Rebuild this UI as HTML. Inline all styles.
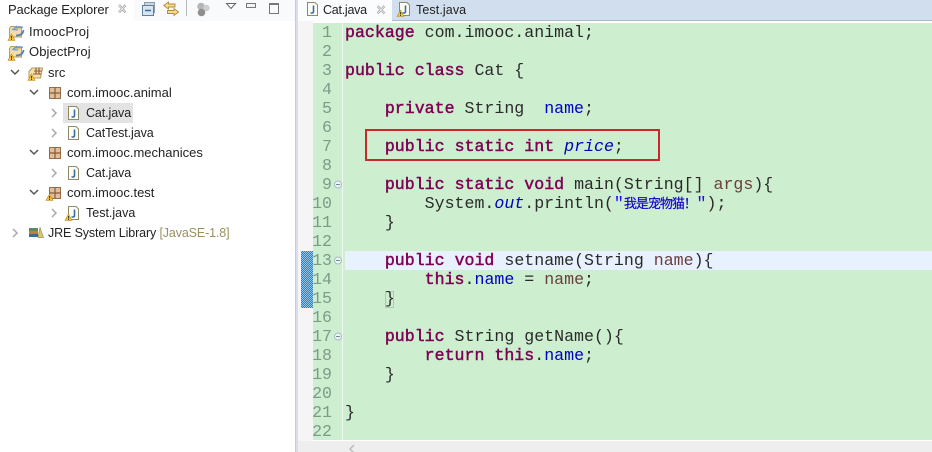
<!DOCTYPE html>
<html><head><meta charset="utf-8"><style>
html,body{margin:0;padding:0;width:932px;height:452px;overflow:hidden;background:#fff}
body{position:relative;font-family:"Liberation Sans","Noto Sans CJK SC",sans-serif}
.a{position:absolute}
.t{position:absolute;font-size:13px;line-height:20px;height:20px;color:#222;white-space:nowrap}
.j{font-size:12.5px;letter-spacing:-.1px}
.ln{position:absolute;left:307px;width:25px;text-align:right;font:16.6px/19px "Liberation Mono",monospace;color:#7f9a87;white-space:pre}
.c{position:absolute;left:345px;font:16.6px/19px "Liberation Mono",monospace;color:#2a2a2a;white-space:pre}
.k{color:#7f0055;-webkit-text-stroke:.45px #7f0055}.f{color:#0000c0}.i{color:#0000c0;font-style:italic}.v{color:#6a3e3e}.s{color:#2a00ff}
.z{display:inline-block;width:72.700px;font-family:"Noto Sans CJK SC",sans-serif;font-size:13px;letter-spacing:-1px;line-height:19px;vertical-align:top;position:relative;top:-1px;color:#1500d0;-webkit-text-stroke:.2px #1500d0}
svg{position:absolute;overflow:visible}
</style></head><body>
<svg width="0" height="0" style="position:absolute"><defs>
<g id="J"><path d="M1.500 .5H9L11.500 3V13.500H1.500Z" fill="#fdfdf6" stroke="#8c8a68"/><path d="M7.500 3.500V9.500Q7.500 11 6 11H4.500" fill="none" stroke="#3b6ea5" stroke-width="1.600"/></g>
<g id="P"><path d="M1.500 3.500L3 1.500H7L8 3H13.500V12H1.500Z" fill="#f4dca8" stroke="#b79a62"/><path d="M5 4.500Q9 .5 15 2.500M9 1L5 4.500L10 5" fill="none" stroke="#6d9ccb" stroke-width="1.300"/><path d="M15.500 5Q15 10.500 8 10.500" fill="none" stroke="#4d82b8" stroke-width="1.700"/></g>
<g id="S"><path d="M1 5.500L4 2H14.500L12.500 12H1Z" fill="#f6dfa9" stroke="#b59a62"/><path d="M6 5H14M5 8H13M8 1.500V8M11 1.500V8" stroke="#8d5a38" stroke-width="1.100" fill="none"/></g>
<g id="W"><path d="M3.500 0L7 6.500H0Z" fill="#f5c33b" stroke="#b98a1d" stroke-width=".6"/><path d="M3.500 2V4.500M3.500 5V6" stroke="#332" stroke-width=".9"/></g>
<g id="B"><rect x=".5" y=".5" width="11" height="11" fill="#dfbe9c" stroke="#9a6c4a"/><path d="M6 .5V11.500M.5 6H11.500" stroke="#8a5a3a" stroke-width="1.200"/></g>
<path id="o" d="M0 0L4 4L0 8" fill="none" stroke="#a8a8a8" stroke-width="1.500"/>
<path id="d" d="M0 0L4 4L8 0" fill="none" stroke="#555" stroke-width="1.500"/>
</defs></svg>

<!-- left panel -->
<div class="a" style="left:0;top:0;width:134px;height:21px;background:#fff"></div>
<div class="a" style="left:134px;top:0;width:161px;height:21px;background:#f9fafb"></div>
<div class="t" style="left:8px;top:0;letter-spacing:-.12px">Package Explorer</div>
<svg style="left:117px;top:4px" width="10" height="10"><path d="M2 1L8.500 8.500M8.500 1L2 8.500" stroke="#999" stroke-width="2.200"/><path d="M2 1L8.500 8.500M8.500 1L2 8.500" stroke="#fff" stroke-width=".8"/></svg>
<svg style="left:142px;top:2px" width="14" height="14"><rect x="2.500" y=".5" width="10" height="10" fill="#ccd6e0" stroke="#8d9cad"/><rect x=".5" y="3.500" width="11" height="10" fill="#d9e6f2" stroke="#60809e"/><path d="M3 8.500H9" stroke="#3d6a96" stroke-width="1.500"/></svg>
<svg style="left:163px;top:1px" width="16" height="16"><path d="M.8 4.500L5.500 1V3H12V6H5.500V8ZM15.500 11L11 7.500V9.500H4.500V12.500H11V14.500Z" fill="#f5dc8e" stroke="#b0893c" stroke-width=".9"/></svg>
<div class="a" style="left:186px;top:0;width:1px;height:16px;background:#bbb"></div>
<svg style="left:196px;top:2px" width="16" height="15"><circle cx="5" cy="4.500" r="3.800" fill="#b5b5b5"/><circle cx="10.500" cy="6" r="3.300" fill="#cfcfcf"/><circle cx="5.500" cy="10.500" r="3.800" fill="#8f8f8f"/></svg>
<svg style="left:226px;top:3px" width="10" height="7"><path d="M.5 .5H9.500L5 5.500Z" fill="#fff" stroke="#666"/></svg>
<div class="a" style="left:246px;top:3px;width:8px;height:3px;border:1px solid #777;background:#f4f4f4"></div>
<div class="a" style="left:269px;top:3px;width:8px;height:8px;border:1px solid #777;border-top-width:2px"></div>

<svg style="left:8px;top:25px" width="17" height="16"><use href="#P"/><use href="#W" y="9"/></svg>
<div class="t" style="left:29px;top:22px;letter-spacing:.2px">ImoocProj</div>
<svg style="left:8px;top:45px" width="17" height="16"><use href="#P"/><use href="#W" y="9"/></svg>
<div class="t" style="left:29px;top:42px;letter-spacing:.1px">ObjectProj</div>
<svg style="left:11px;top:70px" width="9" height="6"><use href="#d"/></svg>
<svg style="left:28px;top:66px" width="17" height="15"><use href="#S"/><use href="#W" y="8"/></svg>
<div class="t" style="left:48px;top:63px">src</div>
<svg style="left:30px;top:90px" width="9" height="6"><use href="#d"/></svg>
<svg style="left:49px;top:87px" width="13" height="13"><use href="#B"/></svg>
<div class="t" style="left:67px;top:83px">com.imooc.animal</div>
<div class="a" style="left:63px;top:103px;width:70px;height:20px;background:#e3e3e3"></div>
<svg style="left:52px;top:109px" width="6" height="9"><use href="#o"/></svg>
<svg style="left:67px;top:106px" width="13" height="15"><use href="#J"/></svg>
<div class="t j" style="left:86px;top:103px">Cat.java</div>
<svg style="left:52px;top:129px" width="6" height="9"><use href="#o"/></svg>
<svg style="left:67px;top:126px" width="13" height="15"><use href="#J"/></svg>
<div class="t j" style="left:86px;top:123px">CatTest.java</div>
<svg style="left:30px;top:150px" width="9" height="6"><use href="#d"/></svg>
<svg style="left:49px;top:147px" width="13" height="13"><use href="#B"/></svg>
<div class="t" style="left:67px;top:143px">com.imooc.mechanices</div>
<svg style="left:52px;top:169px" width="6" height="9"><use href="#o"/></svg>
<svg style="left:67px;top:166px" width="13" height="15"><use href="#J"/></svg>
<div class="t j" style="left:86px;top:163px">Cat.java</div>
<svg style="left:30px;top:190px" width="9" height="6"><use href="#d"/></svg>
<svg style="left:49px;top:187px" width="13" height="13"><use href="#B"/><use href="#W" x="-3" y="7"/></svg>
<div class="t" style="left:67px;top:183px">com.imooc.test</div>
<svg style="left:52px;top:209px" width="6" height="9"><use href="#o"/></svg>
<svg style="left:67px;top:206px" width="13" height="15"><use href="#J"/><use href="#W" x="-2" y="8"/></svg>
<div class="t j" style="left:86px;top:203px;letter-spacing:0">Test.java</div>
<svg style="left:13px;top:229px" width="6" height="9"><use href="#o"/></svg>
<svg style="left:28px;top:227px" width="16" height="12"><rect x="1" y="1" width="9" height="3" fill="#5a8a6a"/><rect x="1" y="4" width="9" height="3" fill="#c0803a"/><rect x="1" y="7" width="9" height="3" fill="#3a6f8f"/><path d="M12 .5L15.500 10.500H10Z" fill="#e8c468" stroke="#a98a3a" stroke-width=".7"/></svg>
<div class="t" style="left:48px;top:223px;font-size:12.5px;letter-spacing:-.13px">JRE System Library <span style="color:#9a8f5f">[JavaSE-1.8]</span></div>

<div class="a" style="left:295px;top:0;width:3px;height:452px;background:#dcdcec;border-left:1px solid #c9c9dc;box-sizing:border-box"></div>

<!-- tab bar -->
<div class="a" style="left:298px;top:0;width:634px;height:20px;background:#d0deed"></div>
<div class="a" style="left:298px;top:20px;width:634px;height:1px;background:#a9bcc6"></div>
<div class="a" style="left:298px;top:0;width:94px;height:21px;background:#fbfcfe"></div>
<svg style="left:306px;top:2px" width="13" height="15"><use href="#J"/></svg>
<div class="t" style="left:323px;top:0;font-size:12.5px;letter-spacing:-.25px">Cat.java</div>
<svg style="left:376px;top:5px" width="10" height="10"><path d="M1.500 1L8.500 8.500M8.500 1L1.500 8.500" stroke="#999" stroke-width="2.200"/><path d="M1.500 1L8.500 8.500M8.500 1L1.500 8.500" stroke="#fff" stroke-width=".8"/></svg>
<svg style="left:398px;top:2px" width="13" height="15"><use href="#J"/><use href="#W" x="-1" y="8"/></svg>
<div class="t" style="left:416px;top:0;font-size:12.5px;letter-spacing:.1px">Test.java</div>

<!-- editor -->
<div class="a" style="left:298px;top:21px;width:15px;height:420px;background:#f5f5f5"></div>
<div class="a" style="left:313px;top:23px;width:619px;height:417px;background:#cdeecf"></div>
<div class="a" style="left:342px;top:23px;width:1px;height:417px;background:#f0f7f0"></div>
<div class="a" style="left:345px;top:251px;width:587px;height:19px;background:#e8f2fe"></div>
<div class="a" style="left:301px;top:251px;width:12px;height:57px;background-color:#2e8ac6;background-image:repeating-conic-gradient(#2a80c4 0 25%,#8fc8ea 0 50%);background-size:2px 2px"></div>
<div class="a" style="left:385px;top:291px;width:9px;height:17px;border:1px solid #b5c4b0;box-sizing:border-box"></div>
<div class="a" style="left:365px;top:129px;width:295px;height:32px;border:2px solid #c9282d;box-sizing:border-box"></div>

<div class="ln" style="top:23px">1
2
3
4
5
6
7
8
9
10
11
12
13
14
15
16
17
18
19
20
21
22</div>

<svg style="left:334px;top:180px" width="8" height="9"><circle cx="4" cy="4.500" r="3.500" fill="#eef5f5" stroke="#a5bcc5"/><path d="M2 4.500H6" stroke="#6f8a95"/></svg>
<svg style="left:334px;top:256px" width="8" height="9"><circle cx="4" cy="4.500" r="3.500" fill="#eef5f5" stroke="#a5bcc5"/><path d="M2 4.500H6" stroke="#6f8a95"/></svg>
<svg style="left:334px;top:332px" width="8" height="9"><circle cx="4" cy="4.500" r="3.500" fill="#eef5f5" stroke="#a5bcc5"/><path d="M2 4.500H6" stroke="#6f8a95"/></svg>

<div class="c" style="top:23px"><span class="k">package</span> com.imooc.animal;

<span class="k">public</span> <span class="k">class</span> Cat {

    <span class="k">private</span> String  <span class="f">name</span>;

    <span class="k">public</span> <span class="k">static</span> <span class="k">int</span> <span class="i">price</span>;

    <span class="k">public</span> <span class="k">static</span> <span class="k">void</span> main(String[] <span class="v">args</span>){
        System.<span class="i">out</span>.println(<span class="s">"</span><span class="z">我是宠物猫！</span><span class="s">"</span>);
    }

    <span class="k">public</span> <span class="k">void</span> setname(String <span class="v">name</span>){
        <span class="k">this</span>.<span class="f">name</span> = <span class="v">name</span>;
    }

    <span class="k">public</span> String getName(){
        <span class="k">return</span> <span class="k">this</span>.<span class="f">name</span>;
    }

}
</div>

<!-- bottom -->
<div class="a" style="left:298px;top:441px;width:634px;height:11px;background:#eeeeee"></div>
<svg style="left:349px;top:445px" width="7" height="7"><path d="M5 0L1 4L5 8" fill="none" stroke="#bbb" stroke-width="1.500"/></svg>
</body></html>
